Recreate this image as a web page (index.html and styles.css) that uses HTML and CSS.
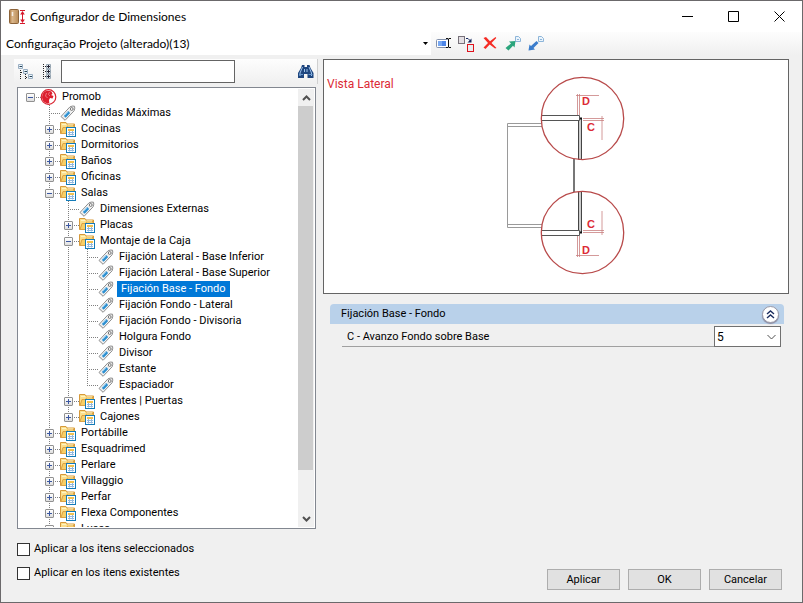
FILE: index.html
```html
<!DOCTYPE html>
<html lang="es">
<head>
<meta charset="utf-8">
<title>Configurador de Dimensiones</title>
<link rel="stylesheet" href="styles.css">
</head>
<body>
<svg class="sprite" aria-hidden="true">
  <symbol id="tag" viewBox="0 0 16 16">
    <path d="M1.500 11.500 10.500 1.800Q13 .6 15 1.200 15.700 3 14.600 5.800L5.600 15.300Z" fill="#e9e9e9" stroke="#8d8d8d"/>
    <path d="M3 11.500 10.800 3M5.500 13.800 13.500 5.500" stroke="#fff" fill="none"/>
    <path d="M4.200 10.800 8.600 6 10.700 8 6.200 12.800Z" fill="#2d8fd0"/>
    <path d="M5 10.600 8.700 6.700" stroke="#86c6ee"/>
    <circle cx="12.200" cy="4" r="1.400" fill="#fff" stroke="#777"/>
  </symbol>
  <symbol id="folder" viewBox="0 0 17 16">
    <path d="M1.500 12.500V1.500H7l1 1.500H15.500V12.500Z" fill="#fbe08d" stroke="#d6993a"/>
    <path d="M2 12.500 4 6.500H7.500L9 4.500H15V12.500Z" fill="#f8cf66" stroke="#dca244"/>
    <path d="M3 3.500H7M9 4H14" stroke="#fff3c4"/>
    <rect x="7.500" y="6.500" width="9" height="9" fill="#fff" stroke="#147bb8"/>
    <path d="M9 9H15" stroke="#f2c14e" stroke-width="2"/>
    <path d="M9 11.500H15M10.500 10V14.500M13.500 10V14.500M9 13.500H15" stroke="#93b9df"/>
  </symbol>
  <symbol id="globe" viewBox="0 0 16 16">
    <circle cx="8" cy="8" r="7.300" fill="#fff" stroke="#d9222f" stroke-width="1.200"/>
    <path d="M4 2.500Q8 .8 11 2.500L12 5 10.500 6 13 7 12 9.500 9.500 9 8.500 11 8.800 14 7 14.500Q1.500 13 1.500 8 2 4 4 2.500Z" fill="#dc1f2e"/>
    <path d="M6 4 5 7 7 9M9 3 8 5.500 9.500 7" fill="none" stroke="#f08a90" stroke-width=".8"/>
  </symbol>
</svg>

<div class="window">
  <header class="titlebar">
    <svg class="app-icon" width="18" height="16" viewBox="0 0 18 16" aria-hidden="true">
      <defs><linearGradient id="wood"><stop stop-color="#a8763f"/><stop offset=".3" stop-color="#dcb88c"/><stop offset="1" stop-color="#b88c58"/></linearGradient></defs>
      <rect x=".5" y=".5" width="9" height="14" rx="1" fill="url(#wood)" stroke="#8c6339"/>
      <path d="M3.500 3V7" stroke="#f5eee4" stroke-width="1.500"/>
      <path d="M11 1.500H16M11 14.500H16M13.500 3V13" stroke="#d6182b"/>
      <path d="M11.200 5.500 13.500 2 15.800 5.500ZM11.200 10.500 13.500 14 15.800 10.500Z" fill="#d6182b"/>
    </svg>
    <h1>Configurador de Dimensiones</h1>
    <div class="caption-buttons">
      <button type="button" aria-label="Minimizar"><svg width="11" height="11"><path d="M0 5.500H11" stroke="#000"/></svg></button>
      <button type="button" aria-label="Maximizar"><svg width="11" height="11"><path d="M.5.5H10.500V10.500H.5Z" fill="none" stroke="#000"/></svg></button>
      <button type="button" aria-label="Cerrar"><svg width="11" height="11"><path d="M.5.5 10.500 10.500M10.500.5.5 10.500" stroke="#000"/></svg></button>
    </div>
  </header>

  <div class="toolbar">
    <div class="combo">
      <select aria-label="Configuración"><option>Configuração Projeto (alterado)(13)</option></select>
      <svg width="5" height="3" aria-hidden="true"><path d="M0 0H5L2.500 3Z" fill="#000"/></svg>
    </div>
    <button type="button" aria-label="Renombrar"><svg width="16" height="16">
      <rect x=".5" y="3.500" width="12" height="8" rx="1" fill="#fff" stroke="#8391ab"/><rect x="2" y="5" width="8" height="5" fill="#4d86e8"/><path d="M2 5H6V10H2Z" fill="#78a8f2"/>
      <path d="M10 2.500H12L12.500 3 13 2.500H15M12.500 3V11M10 11.500H12L12.500 11 13 11.500H15" fill="none" stroke="#111"/></svg></button>
    <button type="button" aria-label="Copiar"><svg width="17" height="16">
      <rect x=".5" y=".5" width="6" height="7" fill="#e4e0e4" stroke="#77717a"/><rect x="9.500" y="8.500" width="6" height="7" fill="#e8eef0" stroke="#e0121c"/>
      <path d="M8 2.500H10L12.500 5" fill="none" stroke="#15275f"/><path d="M13.500 2.500V6.500H9.500Z" fill="#15275f"/></svg></button>
    <button type="button" aria-label="Eliminar"><svg width="16" height="16">
      <path d="M1.500 2 4 1 8 5.300 13.500 1 14.300 2 9.500 7 14.500 12 13 12.500 7.700 8.500 3.500 13 1.500 11.500 6 7Z" fill="#f52c25"/></svg></button>
    <button type="button" aria-label="Exportar"><svg width="16" height="16">
      <path d="M10.500 .5H13.500L15.500 2.500V5.500H10.500Z" fill="#eaf4fc" stroke="#8db5d9"/><path d="M12 3.500H14" stroke="#8db5d9"/>
      <path d="M.5 12 6 7.500 4 5.500 10.500 5 9.500 11.500 8 9.700 3.500 14.500Z" fill="#2ba57c"/></svg></button>
    <button type="button" aria-label="Importar"><svg width="16" height="16">
      <path d="M10.500 .5H13.500L15.500 2.500V5.500H10.500Z" fill="#eaf4fc" stroke="#8db5d9"/><path d="M12 3.500H14" stroke="#8db5d9"/>
      <path d="M.5 14.500 1.500 8.500 3 10 8.500 5 10.500 7 5.500 12 7 13.500Z" fill="#3b7dcc"/></svg></button>
  </div>

  <main class="content">
    <section class="left">
      <div class="searchbar">
        <button type="button" aria-label="Contraer todo"><svg width="18" height="16">
          <path d="M2.500 6V16M7.500 10V16M3 8.500H6M8 13.500H10" stroke="#222" stroke-dasharray="1 1"/>
          <path d="M.5.500H4.500V4.500H.5ZM5.500 5.500H9.500V9.500H5.500ZM10.500 10.500H14.500V14.500H10.500Z" fill="#eef4fa" stroke="#9bb0c4"/>
          <path d="M1.500 2.500H4M6.500 7.500H9M11.500 12.500H14" stroke="#245"/></svg></button>
        <button type="button" aria-label="Expandir todo"><svg width="18" height="16">
          <path d="M2.500 0V15M4 2.500H6M4 7.500H6M4 12.500H6" stroke="#222" stroke-dasharray="1 1"/>
          <path d="M5.500.500H9.500V4.500H5.500ZM5.500 5.500H9.500V9.500H5.500ZM5.500 10.500H9.500V14.500H5.500Z" fill="#e3ebf0" stroke="#98a7b3"/>
          <path d="M6 2.500H9M7.500 1V4M6 7.500H9M7.500 6V9M6 12.500H9M7.500 11V14" stroke="#223"/></svg></button>
        <input type="text" aria-label="Buscar">
        <button type="button" class="find" aria-label="Buscar"><svg width="16" height="14">
          <path d="M4 0H6.500V2H9V0H11.500L12.500 3 15.500 8V13H9.500V9H6V13H0V8L3 3Z" fill="#1f467f"/>
          <path d="M4.500 2 2 8V11M11 2 13.500 8V11M6.500 4V7M9 4V7" fill="none" stroke="#9bc1ea"/><path d="M1 9.500H5M10.500 9.500H14.500" stroke="#6797ce"/></svg></button>
      </div>

      <div class="tree">
        <ul class="root">
          <li><div class="row"><button class="tog minus" aria-label="Contraer"></button><svg><use href="#globe"/></svg><span>Promob</span></div>
            <ul class="open-end">
              <li><div class="row"><i></i><svg><use href="#tag"/></svg><span>Medidas Máximas</span></div></li>
              <li><div class="row"><button class="tog" aria-label="Expandir"></button><svg><use href="#folder"/></svg><span>Cocinas</span></div></li>
              <li><div class="row"><button class="tog" aria-label="Expandir"></button><svg><use href="#folder"/></svg><span>Dormitorios</span></div></li>
              <li><div class="row"><button class="tog" aria-label="Expandir"></button><svg><use href="#folder"/></svg><span>Baños</span></div></li>
              <li><div class="row"><button class="tog" aria-label="Expandir"></button><svg><use href="#folder"/></svg><span>Oficinas</span></div></li>
              <li><div class="row"><button class="tog minus" aria-label="Contraer"></button><svg><use href="#folder"/></svg><span>Salas</span></div>
                <ul>
                  <li><div class="row"><i></i><svg><use href="#tag"/></svg><span>Dimensiones Externas</span></div></li>
                  <li><div class="row"><button class="tog" aria-label="Expandir"></button><svg><use href="#folder"/></svg><span>Placas</span></div></li>
                  <li><div class="row"><button class="tog minus" aria-label="Contraer"></button><svg><use href="#folder"/></svg><span>Montaje de la Caja</span></div>
                    <ul>
                      <li><div class="row"><i></i><svg><use href="#tag"/></svg><span>Fijación Lateral - Base Inferior</span></div></li>
                      <li><div class="row"><i></i><svg><use href="#tag"/></svg><span>Fijación Lateral - Base Superior</span></div></li>
                      <li><div class="row"><i></i><svg><use href="#tag"/></svg><span class="selected">Fijación Base - Fondo</span></div></li>
                      <li><div class="row"><i></i><svg><use href="#tag"/></svg><span>Fijación Fondo - Lateral</span></div></li>
                      <li><div class="row"><i></i><svg><use href="#tag"/></svg><span>Fijación Fondo - Divisoria</span></div></li>
                      <li><div class="row"><i></i><svg><use href="#tag"/></svg><span>Holgura Fondo</span></div></li>
                      <li><div class="row"><i></i><svg><use href="#tag"/></svg><span>Divisor</span></div></li>
                      <li><div class="row"><i></i><svg><use href="#tag"/></svg><span>Estante</span></div></li>
                      <li><div class="row"><i></i><svg><use href="#tag"/></svg><span>Espaciador</span></div></li>
                    </ul>
                  </li>
                  <li><div class="row"><button class="tog" aria-label="Expandir"></button><svg><use href="#folder"/></svg><span>Frentes | Puertas</span></div></li>
                  <li><div class="row"><button class="tog" aria-label="Expandir"></button><svg><use href="#folder"/></svg><span>Cajones</span></div></li>
                </ul>
              </li>
              <li><div class="row"><button class="tog" aria-label="Expandir"></button><svg><use href="#folder"/></svg><span>Portábille</span></div></li>
              <li><div class="row"><button class="tog" aria-label="Expandir"></button><svg><use href="#folder"/></svg><span>Esquadrimed</span></div></li>
              <li><div class="row"><button class="tog" aria-label="Expandir"></button><svg><use href="#folder"/></svg><span>Perlare</span></div></li>
              <li><div class="row"><button class="tog" aria-label="Expandir"></button><svg><use href="#folder"/></svg><span>Villaggio</span></div></li>
              <li><div class="row"><button class="tog" aria-label="Expandir"></button><svg><use href="#folder"/></svg><span>Perfar</span></div></li>
              <li><div class="row"><button class="tog" aria-label="Expandir"></button><svg><use href="#folder"/></svg><span>Flexa Componentes</span></div></li>
              <li><div class="row"><button class="tog" aria-label="Expandir"></button><svg><use href="#folder"/></svg><span>Lusso</span></div></li>
            </ul>
          </li>
        </ul>
        <div class="scrollbar">
          <button type="button" aria-label="Subir"><svg width="9" height="6"><path d="M1 5 4.500 1.500 8 5" fill="none" stroke="#505050" stroke-width="2"/></svg></button>
          <div class="track"><div class="thumb"></div></div>
          <button type="button" aria-label="Bajar"><svg width="9" height="6"><path d="M1 1 4.500 4.500 8 1" fill="none" stroke="#505050" stroke-width="2"/></svg></button>
        </div>
      </div>

      <div class="checks">
        <label><input type="checkbox">Aplicar a los itens seleccionados</label>
        <label><input type="checkbox">Aplicar en los itens existentes</label>
      </div>
    </section>

    <section class="right">
      <div class="preview">
        <svg viewBox="324 60 464 233" role="img" aria-label="Vista Lateral">
          <text class="view-name" x="327" y="88">Vista Lateral</text>
          <g fill="none">
            <path d="M542 123.500H507.500V227.500H542M508 126.500H542M508 224.500H542" stroke="#9a9a9a"/>
            <path d="M574 159V192" stroke="#777" stroke-width="2"/>
            <g id="detail">
              <path d="M578.500 119V159.500H581.500V118" fill="#ccc" stroke="#444"/>
              <path d="M542 115.500H579.500V120.500H542" fill="#fff" stroke="#555"/>
              <path d="M580 118.500H582" stroke="#111" stroke-width="2"/>
              <path d="M577.500 94V115M579.500 94V115M576 95.500H599M583 118.500H604M583 120.500H604M602 116V140" stroke="#c98080" stroke-width=".8"/>
              <circle cx="582.500" cy="118.500" r="41.200" stroke="#b84a4a" stroke-width="1.300"/>
            </g>
            <use href="#detail" transform="translate(0 351) scale(1 -1)"/>
          </g>
          <g class="letters">
            <text x="582" y="105">D</text><text x="587" y="131">C</text>
            <text x="587" y="228">C</text><text x="582" y="254">D</text>
          </g>
        </svg>
      </div>

      <div class="group">
        <div class="group-head">
          <h2>Fijación Base - Fondo</h2>
          <button type="button" aria-label="Contraer grupo"><svg width="9" height="9"><path d="M1 4 4.500 1 8 4M1 8 4.500 5 8 8" fill="none" stroke="#1c2d5f" stroke-width="1.400"/></svg></button>
        </div>
        <div class="field">
          <label for="avanzo">C - Avanzo Fondo sobre Base</label>
          <div class="value">
            <select id="avanzo"><option>5</option></select>
            <svg width="9" height="6" aria-hidden="true"><path d="M.5 1 4.500 5 8.500 1" fill="none" stroke="#505050"/></svg>
          </div>
        </div>
      </div>

      <div class="actions">
        <button type="button">Aplicar</button>
        <button type="button">OK</button>
        <button type="button">Cancelar</button>
      </div>
    </section>
  </main>
</div>
</body>
</html>
```
FILE: styles.css
```css
* { box-sizing: border-box; }

body {
  margin: 0;
  font: 11px/16px Roboto, "Liberation Sans", sans-serif;
  color: #000;
}

button, input, select {
  font: inherit;
  color: inherit;
  margin: 0;
  padding: 0;
}

button { background: none; border: 0; }
svg { display: block; flex: none; }
.sprite { position: absolute; width: 0; height: 0; }

.window {
  display: flex;
  flex-direction: column;
  height: 100vh;
  border: 1px solid #6b696b;
  background: #f0f0f0;
}

/* Title bar */
.titlebar {
  display: flex;
  align-items: center;
  height: 31px;
  padding-left: 8px;
  background: #fff;
}

.titlebar h1 {
  flex: 1;
  margin: 0 0 0 3px;
  font: 12px/16px Lato, sans-serif;
}

.caption-buttons { display: flex; height: 100%; }
.caption-buttons button { display: grid; place-items: center; width: 46px; }

/* Configuration toolbar */
.toolbar {
  display: flex;
  height: 23px;
  background: linear-gradient(#fdfdfd, #f0f0f0);
}

.combo {
  display: flex;
  align-items: center;
  width: 430px;
  margin-right: 1px;
  padding: 0 3px 0 1px;
  background: #fff;
}

.combo select {
  flex: 1;
  height: 23px;
  padding-left: 4px;
  border: 0;
  background: none;
  appearance: none;
  font: 12px/16px Lato, sans-serif;
}

.toolbar button { display: grid; place-items: center; width: 23px; }

.content { display: flex; flex: 1; min-height: 0; padding-top: 4px; }

/* Left side */
.left {
  display: flex;
  flex-direction: column;
  flex: none;
  width: 317px;
  padding-left: 13px;
}

.searchbar {
  display: flex;
  align-items: center;
  height: 25px;
  padding: 0 3px 0 1px;
  background: linear-gradient(#fdfdfd, #f0f0f0);
  border-right: 1px solid #d0d0d0;
}

.searchbar button { display: grid; place-items: center; width: 23px; }
.searchbar input {
  width: 174px;
  height: 23px;
  padding: 0 4px;
  border: 1px solid #646464;
  background: #fff;
}
.searchbar button.find { width: 16px; margin-left: auto; }

.tree {
  display: flex;
  flex: 1;
  min-height: 0;
  margin: 3px 2px 0 3px;
  padding: 1px;
  border: 1px solid #828790;
  background: #fff;
  overflow: hidden;
}

.tree ul { position: relative; margin: 0; padding: 0 0 0 19px; list-style: none; }
.tree ul.root { flex: 1; padding-left: 2px; overflow: hidden; }

.tree ul ul::before {
  content: "";
  position: absolute;
  left: 28px;
  top: 0;
  bottom: 8px;
  width: 1px;
  background: repeating-linear-gradient(#808080 0 1px, transparent 1px 2px);
}
.tree ul.open-end::before { bottom: 0; }

.row { position: relative; display: flex; align-items: center; height: 16px; white-space: nowrap; }
.row::before {
  content: "";
  position: absolute;
  left: 9px;
  top: 8px;
  width: 12px;
  height: 1px;
  background: repeating-linear-gradient(90deg, #808080 0 1px, transparent 1px 2px);
}
.row i { width: 19px; }
.row svg { position: relative; width: 17px; height: 16px; margin-right: 2px; }
.row span { padding-left: 3px; }
.row .selected { margin-left: 1px; padding: 0 4px; background: #0078d7; color: #fff; }

.tog {
  position: relative;
  width: 9px;
  height: 9px;
  margin: 1px 5px 0;
  border: 1px solid #919191;
  border-radius: 1px;
  background:
    linear-gradient(#3b57a0, #3b57a0) center / 5px 1px no-repeat,
    linear-gradient(#3b57a0, #3b57a0) center / 1px 5px no-repeat,
    linear-gradient(#fff, #dedede);
}
.tog.minus {
  background:
    linear-gradient(#3b57a0, #3b57a0) center / 5px 1px no-repeat,
    linear-gradient(#fff, #dedede);
}

.scrollbar { display: flex; flex-direction: column; width: 16px; background: #f0f0f0; }
.scrollbar button { display: grid; place-items: center; height: 17px; }
.track { flex: 1; }
.thumb { height: 90%; margin-right: 1px; background: #cdcdcd; }

.checks {
  display: flex;
  flex-direction: column;
  gap: 8px;
  padding: 12px 0 21px 3px;
}
.checks label { display: flex; align-items: center; gap: 4px; }
.checks input {
  width: 13px;
  height: 13px;
  border: 1px solid #333;
  background: #fff;
  appearance: none;
}

/* Right side */
.right {
  display: flex;
  flex-direction: column;
  flex: 1;
  min-width: 0;
  padding: 0 13px 12px 5px;
}

.preview { border: 1px solid #646464; background: #fff; }
.preview svg { width: 100%; height: auto; }
.view-name { font-size: 12px; fill: #dc2a35; }
.letters { font: bold 11px "Liberation Sans", sans-serif; fill: #dc2a35; }

.group { margin: 10px 5px 0 7px; }
.group-head {
  display: flex;
  align-items: center;
  justify-content: space-between;
  height: 20px;
  padding: 0 5px 0 11px;
  border-radius: 4px 4px 0 0;
  background: #b9d1ea;
}
.group-head h2 { margin: 0; font: inherit; }
.group-head button {
  display: grid;
  place-items: center;
  width: 17px;
  height: 17px;
  border: 1px solid #9a9aa8;
  border-radius: 50%;
  background: #fff;
  box-shadow: 0 1px 1px #8888a0;
}

.field { display: flex; margin: 2px 3px 0 12px; }
.field label {
  flex: 1;
  padding: 3px 0 1px 5px;
  border-bottom: 1px solid #a0a0a0;
}
.value {
  display: flex;
  align-items: center;
  width: 67px;
  height: 21px;
  padding: 0 4px 0 2px;
  border: 1px solid #707070;
  background: #fff;
}
.value select { flex: 1; border: 0; background: none; appearance: none; font-size: 12px; }

.actions {
  display: flex;
  justify-content: flex-end;
  gap: 8px;
  margin-top: auto;
  padding-right: 7px;
}
.actions button {
  width: 73px;
  height: 21px;
  border: 1px solid #adadad;
  background: #e1e1e1;
}
```
